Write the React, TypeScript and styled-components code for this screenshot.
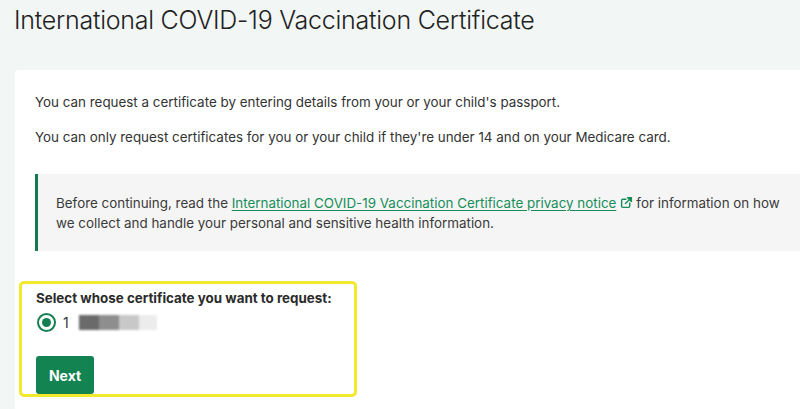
import styled, { createGlobalStyle } from "styled-components";

const GlobalStyle = createGlobalStyle`
  html, body {
    margin: 0;
    padding: 0;
    background: #f2f6f5;
    overflow: hidden;
  }
  body {
    font-family: "Inter", "Liberation Sans", sans-serif;
    color: #313131;
  }
`;

const Page = styled.div`
  width: 800px;
  height: 409px;
  overflow: hidden;
  padding: 5px 0 0 14px;
  box-sizing: border-box;
`;

const Title = styled.h1`
  margin: 0;
  font-size: 25px;
  font-weight: 300;
  letter-spacing: -0.25px;
  color: #222;
  line-height: 30px;
`;

const Card = styled.section`
  margin: 35px 0 0 1px;
  width: 805px;
  min-height: 340px;
  background: #fff;
  border-radius: 3px;
  padding: 22px 20px 0 20px;
  box-sizing: border-box;
`;

const Para = styled.p`
  margin: 0 0 15px;
  font-size: 13.4px;
  line-height: 20px;
  color: #333;
`;

const Callout = styled.div`
  margin-top: 27px;
  background: #f5f5f5;
  border-left: 3px solid #167a50;
  padding: 19px 20px 18px 18px;
  font-size: 13.4px;
  line-height: 20px;
  color: #3a3a3a;
`;

const Link = styled.a`
  color: #178d5a;
  text-decoration: underline;
  text-underline-offset: 2px;
  svg {
    margin: 0 3px 0 4px;
    vertical-align: -1px;
  }
`;

const Highlight = styled.div`
  margin: 30px 0 0 -16px;
  width: 338px;
  height: 116px;
  border: 3px solid #f3e92c;
  border-radius: 5px;
  box-sizing: border-box;
  padding: 4px 0 0 14px;
`;

const Legend = styled.div`
  font-size: 13.4px;
  font-weight: 700;
  color: #2b2b2b;
  line-height: 20px;
`;

const RadioRow = styled.label`
  display: flex;
  align-items: center;
  gap: 7px;
  margin-top: 5px;
  font-size: 14px;
  color: #333;
`;

const Radio = styled.span`
  width: 19px;
  height: 19px;
  border: 2px solid #157f52;
  border-radius: 50%;
  box-sizing: border-box;
  display: flex;
  align-items: center;
  justify-content: center;
  margin-left: 1px;
  &::after {
    content: "";
    width: 9px;
    height: 9px;
    border-radius: 50%;
    background: #157f52;
  }
`;

const Blur = styled.span`
  display: flex;
  margin-left: 3px;
  height: 15px;
  filter: blur(1px);
`;

const BlurCell = styled.span<{ $tone: string; $w: number }>`
  width: ${(p) => p.$w}px;
  background: ${(p) => p.$tone};
`;

const Button = styled.button`
  display: block;
  margin-top: 24px;
  background: #148352;
  color: #fff;
  border: none;
  border-radius: 3px;
  font-family: inherit;
  font-size: 14px;
  font-weight: 700;
  width: 58px;
  height: 38px;
`;

const ExternalIcon = () => (
  <svg width="13" height="13" viewBox="0 0 24 24" fill="none" stroke="#178d5a" strokeWidth="2.6" strokeLinecap="round" strokeLinejoin="round">
    <path d="M18 13v6a2 2 0 0 1-2 2H5a2 2 0 0 1-2-2V8a2 2 0 0 1 2-2h6" />
    <path d="M14 3h7v7z" fill="#178d5a" />
    <path d="M10 14L21 3" />
  </svg>
);

export default function App() {
  return (
    <>
      <GlobalStyle />
      <Page>
        <Title>International COVID-19 Vaccination Certificate</Title>
        <Card>
          <Para>You can request a certificate by entering details from your or your child's passport.</Para>
          <Para>You can only request certificates for you or your child if they're under 14 and on your Medicare card.</Para>
          <Callout>
            Before continuing, read the{" "}
            <Link href="#">
              International COVID-19 Vaccination Certificate privacy notice
              <ExternalIcon />
            </Link>
            for information on how we collect and handle your personal and sensitive health information.
          </Callout>
          <Highlight>
            <Legend>Select whose certificate you want to request:</Legend>
            <RadioRow>
              <Radio />
              1
              <Blur>
                <BlurCell $tone="#6a6a6a" $w={20} />
                <BlurCell $tone="#8e8e8e" $w={20} />
                <BlurCell $tone="#c8c8c8" $w={20} />
                <BlurCell $tone="#ececec" $w={18} />
              </Blur>
            </RadioRow>
            <Button>Next</Button>
          </Highlight>
        </Card>
      </Page>
    </>
  );
}
